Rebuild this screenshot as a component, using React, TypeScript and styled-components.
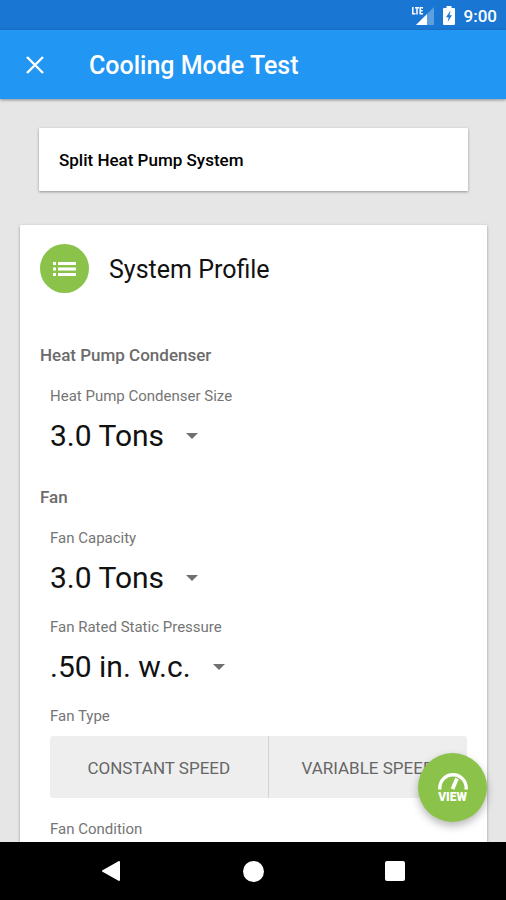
import React, { useState } from "react";
import styled, { createGlobalStyle } from "styled-components";

const colors = {
  primary: "#2196f3",
  primaryDark: "#1976d2",
  accent: "#8bc34a",
  background: "#e6e6e6",
  card: "#ffffff",
  toggle: "#eeeeee",
};

const GlobalStyle = createGlobalStyle`
  *, *::before, *::after { box-sizing: border-box; }
  body {
    margin: 0;
    background: ${colors.background};
    font-family: Roboto, "Noto Sans", sans-serif;
  }
  button, select { font-family: inherit; }
`;

const Screen = styled.div`
  display: flex;
  flex-direction: column;
  height: 100vh;
  overflow: hidden;
`;

const StatusBar = styled.div`
  display: flex;
  flex: none;
  align-items: center;
  justify-content: flex-end;
  height: 30px;
  padding: 2px 9px 0 0;
  background: ${colors.primaryDark};
  color: #fff;
`;

const SignalIcon = styled.svg`
  width: 24px;
  height: 20px;
  margin-right: 8px;
`;

const BatteryIcon = styled.svg`
  width: 12px;
  height: 20px;
  margin-right: 9px;
`;

const Clock = styled.time`
  font-size: 17px;
  font-weight: 500;
  line-height: 20px;
`;

const AppBar = styled.header`
  position: relative;
  z-index: 1;
  display: flex;
  flex: none;
  align-items: center;
  gap: 40px;
  height: 69px;
  padding: 0 20px;
  background: ${colors.primary};
  box-shadow: 0 1px 3px rgba(0, 0, 0, 0.4);
  color: #fff;
`;

const IconButton = styled.button`
  display: flex;
  align-items: center;
  justify-content: center;
  width: 29px;
  height: 40px;
  padding: 0;
  border: 0;
  background: none;
  color: inherit;
  cursor: pointer;
`;

const Title = styled.h1`
  margin: 0;
  padding-top: 2px;
  font-size: 25px;
  font-weight: 500;
  line-height: 32px;
`;

const Body = styled.div`
  position: relative;
  display: flex;
  flex: 1;
  min-height: 0;
`;

const Content = styled.main`
  flex: 1;
  min-width: 0;
  overflow-y: auto;
  scrollbar-width: none;
  padding: 29px 19px 0 20px;
`;

const Card = styled.section`
  background: ${colors.card};
  box-shadow: 0 1px 3px rgba(0, 0, 0, 0.36);
  border-radius: 1px;
`;

const SystemCard = styled(Card)`
  margin: 0 19px 34px;
  padding: 21px 20px 19px;
`;

const SystemName = styled.p`
  margin: 0;
  color: #000;
  font-size: 17px;
  font-weight: 500;
  line-height: 23px;
`;

const ProfileCard = styled(Card)`
  padding: 19px 20px 20px;
`;

const ProfileHeader = styled.div`
  display: flex;
  align-items: center;
  gap: 20px;
  margin-bottom: 52px;
`;

const Avatar = styled.span`
  display: flex;
  align-items: center;
  justify-content: center;
  width: 49px;
  height: 49px;
  border-radius: 50%;
  background: ${colors.accent};
`;

const ProfileTitle = styled.h2`
  margin: 0;
  padding-top: 3px;
  color: #111;
  font-size: 25px;
  font-weight: 400;
  line-height: 32px;
`;

const Group = styled.section`
  margin-bottom: 31px;
`;

const GroupTitle = styled.h3`
  margin: 0 0 21px;
  color: #6b6b6b;
  font-size: 17px;
  font-weight: 500;
  line-height: 20px;
`;

const Fields = styled.div`
  display: flex;
  flex-direction: column;
  gap: 19px;
  padding-left: 10px;
`;

const Field = styled.div`
  display: flex;
  flex-direction: column;
  gap: 10px;
`;

const Label = styled.label`
  color: #757575;
  font-size: 15px;
  line-height: 20px;
`;

const SelectRow = styled.div`
  display: flex;
  align-items: center;
  gap: 22px;
`;

const Select = styled.select`
  appearance: none;
  field-sizing: content;
  height: 40px;
  padding: 0;
  border: 0;
  background: none;
  color: #111;
  font-size: 30px;
  line-height: 40px;
  cursor: pointer;
`;

const Caret = styled.svg`
  width: 12px;
  height: 6px;
  pointer-events: none;
`;

const Toggle = styled.div`
  display: grid;
  grid-template-columns: 12fr 11fr;
  margin-bottom: 2px;
  overflow: hidden;
  border-radius: 3px;
  background: ${colors.toggle};
`;

const ToggleButton = styled.button<{ $divided?: boolean }>`
  height: 62px;
  padding: 2px 0 0;
  border: 0;
  border-left: ${(p) => (p.$divided ? "1px solid #d2d2d2" : "0")};
  background: none;
  color: #666;
  font-size: 17px;
  line-height: 20px;
  text-transform: uppercase;
  cursor: pointer;
`;

const Fab = styled.button`
  position: absolute;
  right: 19px;
  bottom: 20px;
  display: flex;
  flex-direction: column;
  align-items: center;
  justify-content: center;
  width: 69px;
  height: 69px;
  padding: 0;
  border: 0;
  border-radius: 50%;
  background: ${colors.accent};
  box-shadow: 0 4px 8px rgba(0, 0, 0, 0.28);
  color: #fff;
  font-size: 12px;
  font-weight: 900;
  line-height: 12px;
  cursor: pointer;
`;

const NavBar = styled.nav`
  display: flex;
  flex: none;
  height: 58px;
  padding: 0 40px;
  background: #000;
  color: #fff;
`;

const NavButton = styled.button`
  display: flex;
  flex: 1;
  align-items: center;
  justify-content: center;
  padding: 0;
  border: 0;
  background: none;
  color: inherit;
  cursor: pointer;
`;

interface SelectFieldProps {
  id: string;
  label: string;
  initial: string;
  options: string[];
}

function SelectField({ id, label, initial, options }: SelectFieldProps) {
  const [value, setValue] = useState(initial);
  return (
    <Field>
      <Label htmlFor={id}>{label}</Label>
      <SelectRow>
        <Select id={id} value={value} onChange={(e) => setValue(e.target.value)}>
          {options.map((option) => (
            <option key={option}>{option}</option>
          ))}
        </Select>
        <Caret viewBox="0 0 12 6" aria-hidden="true">
          <path d="M0 0h12L6 6z" fill="#707070" />
        </Caret>
      </SelectRow>
    </Field>
  );
}

export default function App() {
  return (
    <>
      <GlobalStyle />
      <Screen>
        <StatusBar>
          <SignalIcon viewBox="0 0 24 20" aria-hidden="true">
            <path d="M23 1v18H5z" fill="#fff" opacity=".3" />
            <path d="M16 8v11H5z" fill="#fff" />
            <path
              d="M1.8 1v6.7h2.7M4 1.8h4M6 1.8v6.7M12 1.8H9.2v5.9H12M9.2 4.7h2.5"
              fill="none"
              stroke="#fff"
              strokeWidth="1.5"
            />
          </SignalIcon>
          <BatteryIcon viewBox="0 0 12 20" aria-hidden="true">
            <path d="M3.5 0h5v2H11q1 0 1 1v15q0 1-1 1H1q-1 0-1-1V3q0-1 1-1h2.5z" fill="#fff" />
            <path d="M7.5 4.5 3 11.2h2.700l-1 4.800L9 9.300H6.500z" fill={colors.primaryDark} />
          </BatteryIcon>
          <Clock>9:00</Clock>
        </StatusBar>

        <AppBar>
          <IconButton type="button" aria-label="Close">
            <svg width="18" height="18" viewBox="0 0 18 18" aria-hidden="true">
              <path d="m1 1 16 16M17 1 1 17" stroke="currentColor" strokeWidth="2.4" />
            </svg>
          </IconButton>
          <Title>Cooling Mode Test</Title>
        </AppBar>

        <Body>
          <Content>
            <SystemCard>
              <SystemName>Split Heat Pump System</SystemName>
            </SystemCard>

            <ProfileCard>
              <ProfileHeader>
                <Avatar>
                  <svg width="23" height="14" viewBox="0 0 23 14" fill="#fff" aria-hidden="true">
                    <path d="M0 0h3v3H0zM0 5.5h3v3H0zM0 11h3v3H0zM5 0h18v3H5zM5 5.5h18v3H5zM5 11h18v3H5z" />
                  </svg>
                </Avatar>
                <ProfileTitle>System Profile</ProfileTitle>
              </ProfileHeader>

              <Group>
                <GroupTitle>Heat Pump Condenser</GroupTitle>
                <Fields>
                  <SelectField
                    id="condenser-size"
                    label="Heat Pump Condenser Size"
                    initial="3.0 Tons"
                    options={["2.0 Tons", "2.5 Tons", "3.0 Tons", "3.5 Tons", "4.0 Tons"]}
                  />
                </Fields>
              </Group>

              <Group>
                <GroupTitle>Fan</GroupTitle>
                <Fields>
                  <SelectField
                    id="fan-capacity"
                    label="Fan Capacity"
                    initial="3.0 Tons"
                    options={["2.0 Tons", "2.5 Tons", "3.0 Tons", "3.5 Tons", "4.0 Tons"]}
                  />
                  <SelectField
                    id="static-pressure"
                    label="Fan Rated Static Pressure"
                    initial=".50 in. w.c."
                    options={[".30 in. w.c.", ".50 in. w.c.", ".80 in. w.c."]}
                  />
                  <Field>
                    <Label as="span" id="fan-type">
                      Fan Type
                    </Label>
                    <Toggle role="group" aria-labelledby="fan-type">
                      <ToggleButton type="button">Constant Speed</ToggleButton>
                      <ToggleButton type="button" $divided>
                        Variable Speed
                      </ToggleButton>
                    </Toggle>
                  </Field>
                  <Field>
                    <Label as="span">Fan Condition</Label>
                  </Field>
                </Fields>
              </Group>
            </ProfileCard>
          </Content>

          <Fab type="button">
            <svg width="30" height="18" viewBox="0 0 30 18" fill="none" stroke="#fff" aria-hidden="true">
              <path d="M1.8 16.5v-1.500a13.2 13.2 0 0 1 26.4 0v1.500" strokeWidth="3.4" />
              <path d="M14.5 16 19 5.5" strokeWidth="3.8" />
            </svg>
            VIEW
          </Fab>
        </Body>

        <NavBar aria-label="System">
          <NavButton type="button" aria-label="Back">
            <svg width="18" height="20" viewBox="0 0 18 20" aria-hidden="true">
              <path d="M17 1v18L1 10z" fill="#fff" stroke="#fff" strokeWidth="2" strokeLinejoin="round" />
            </svg>
          </NavButton>
          <NavButton type="button" aria-label="Home">
            <svg width="21" height="21" viewBox="0 0 21 21" aria-hidden="true">
              <circle cx="10.5" cy="10.5" r="10.5" fill="#fff" />
            </svg>
          </NavButton>
          <NavButton type="button" aria-label="Recent apps">
            <svg width="20" height="20" viewBox="0 0 20 20" aria-hidden="true">
              <rect width="20" height="20" rx="2" fill="#fff" />
            </svg>
          </NavButton>
        </NavBar>
      </Screen>
    </>
  );
}
